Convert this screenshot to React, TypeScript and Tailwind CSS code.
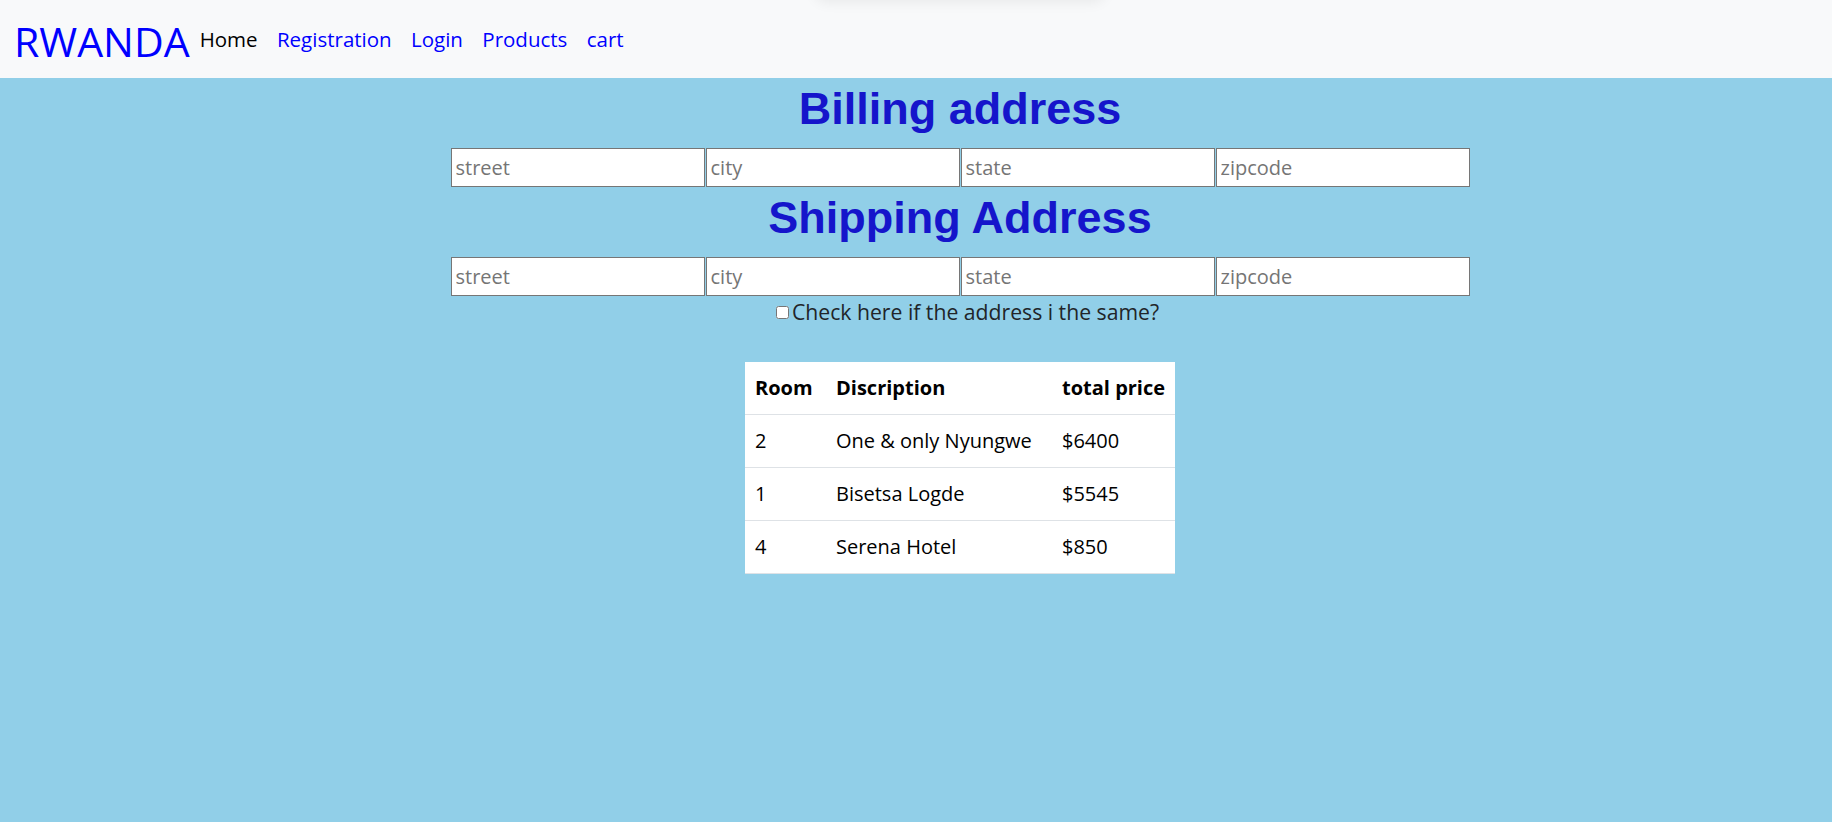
import React from "react";

const sans = { fontFamily: "'Open Sans','Noto Sans',sans-serif" };

function Nav() {
  const links = ["Registration", "Login", "Products", "cart"];
  return (
    <nav
      className="relative flex h-[78px] items-center overflow-hidden bg-[#f8f9fa] pl-[14px] text-[20.5px]"
      style={sans}
    >
      <div className="absolute left-[815px] top-[-24px] h-[24px] w-[290px] rounded-full shadow-[0_2px_14px_rgba(0,0,0,0.07)]" />
      <span className="mt-[3px] text-[41px] leading-[46px] text-[#0000ff]">RWANDA</span>
      <a className="ml-[10px] mr-[9.7px] leading-[30px] text-black">Home</a>
      {links.map((l) => (
        <a key={l} className="mx-[9.7px] leading-[30px] text-[#0000ff]">
          {l}
        </a>
      ))}
    </nav>
  );
}

function AddressRow() {
  const ph = ["street", "city", "state", "zipcode"];
  return (
    <div className="flex gap-[1px]">
      {ph.map((p) => (
        <input
          key={p}
          placeholder={p}
          className="h-[39px] w-[254px] border border-[#767676] bg-white px-[4px] text-[20px] text-black outline-none placeholder:text-[#757575]"
          style={sans}
        />
      ))}
    </div>
  );
}

function Heading({ children }: { children: React.ReactNode }) {
  return (
    <h1
      className="h-[70px] text-center text-[45px] font-bold leading-[62px] text-[#1515cb]"
      style={{ fontFamily: "'Liberation Sans Narrow','Arial Narrow','Liberation Sans',sans-serif" }}
    >
      {children}
    </h1>
  );
}

export default function App() {
  const rows = [
    ["2", "One & only Nyungwe", "$6400"],
    ["1", "Bisetsa Logde", "$5545"],
    ["4", "Serena Hotel", "$850"],
  ];
  return (
    <div className="min-h-[822px] bg-[#91cfe8]">
      <Nav />
      <div className="flex flex-col items-center pl-[88px]">
        <Heading>Billing address</Heading>
        <AddressRow />
        <Heading>Shipping Address</Heading>
        <AddressRow />
        <label
          className="ml-[15px] mt-[1px] flex h-[30px] items-center text-[21.2px] leading-[30px] text-[#212529]"
          style={sans}
        >
          <input type="checkbox" className="m-0 h-[13px] w-[13px]" />
          <span className="ml-[3px]">Check here if the address i the same?</span>
        </label>
        <table
          className="mt-[35px] w-[430px] table-fixed border-collapse bg-white text-[20px] text-black"
          style={sans}
        >
          <thead>
            <tr className="h-[52px] border-b border-[#dee2e6]">
              <th className="w-[81px] whitespace-nowrap px-[10px] text-left font-bold">Room</th>
              <th className="w-[226px] whitespace-nowrap px-[10px] text-left font-bold">Discription</th>
              <th className="w-[123px] whitespace-nowrap px-[10px] text-left font-bold">total price</th>
            </tr>
          </thead>
          <tbody>
            {rows.map((r) => (
              <tr key={r[0]} className="h-[53px] border-b border-[#dee2e6]">
                {r.map((c, i) => (
                  <td key={i} className="whitespace-nowrap px-[10px]">
                    {c}
                  </td>
                ))}
              </tr>
            ))}
          </tbody>
        </table>
      </div>
    </div>
  );
}
